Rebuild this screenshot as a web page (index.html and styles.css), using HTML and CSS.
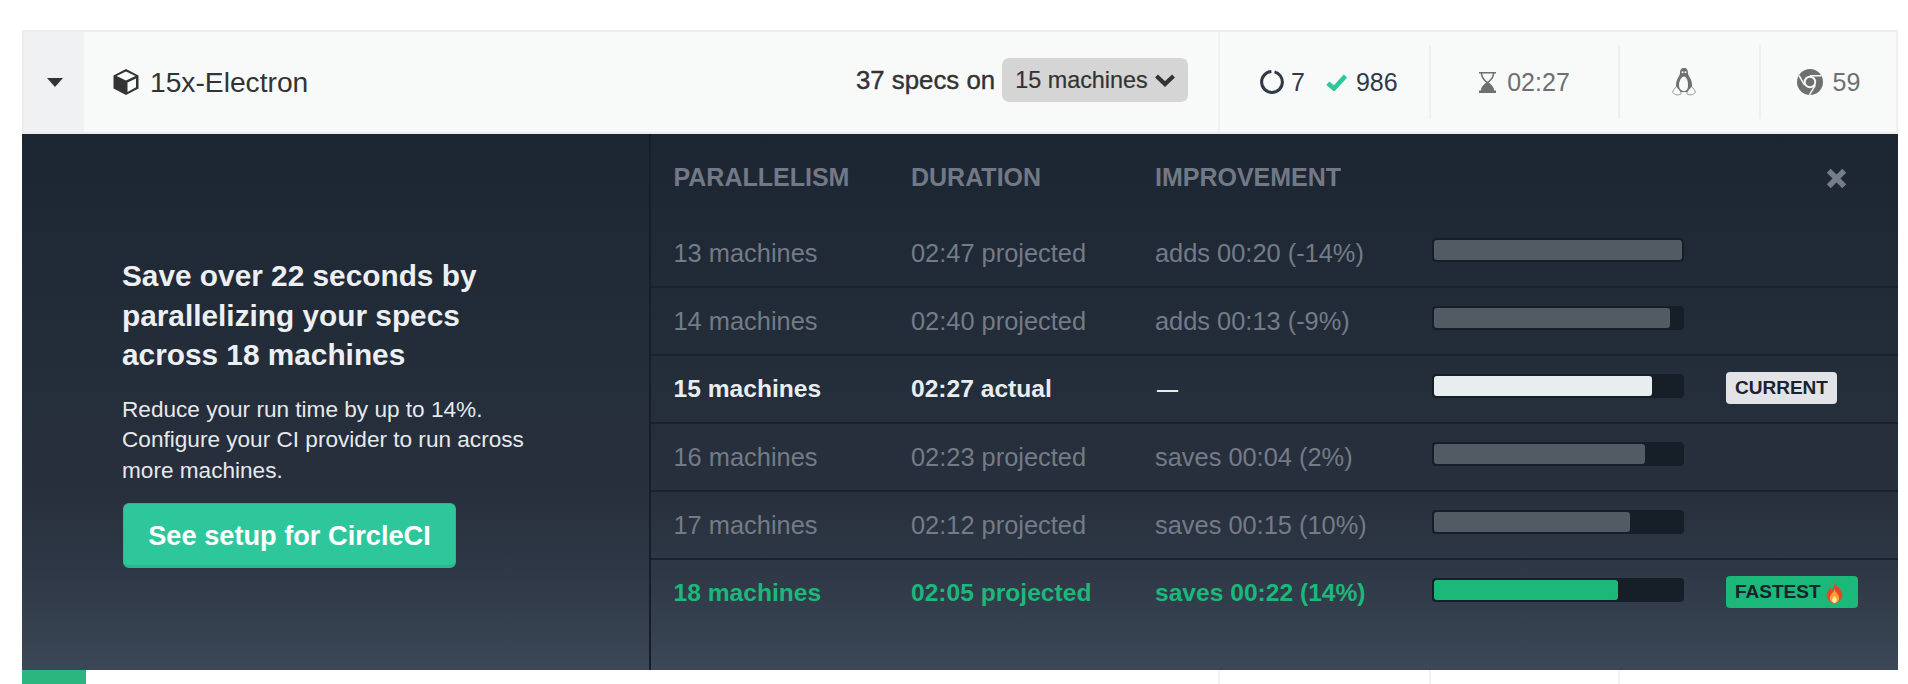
FILE: index.html
```html
<!DOCTYPE html>
<html lang="en">
<head>
<meta charset="utf-8">
<title>15x-Electron</title>
<link rel="stylesheet" href="styles.css">
</head>
<body>
<div class="card">
  <header class="head">
    <div class="toggle"><svg class="caret" viewBox="0 0 16 9"><path d="M0 0h16L8 9z"/></svg></div>
    <div class="name">
      <svg class="cube" viewBox="0 0 26 26"><path class="cube-dark" d="M13 0 25.500 6.500v13L13 26 .5 19.500v-13z"/><path class="cube-light" d="M13 2.500 22.500 7 13 11.500 3.500 7z"/><path class="cube-light" d="M14.500 13.500 23 9.500v8.800l-8.500 4.700z"/></svg>
      <span>15x-Electron</span>
    </div>
    <div class="specs">
      <span class="specs-text">37 specs on</span>
      <button class="machines">15 machines <svg class="chev" viewBox="0 0 20 14"><path d="M1.500 3 10 11 18.500 3" /></svg></button>
    </div>
    <div class="results">
      <svg class="ring" viewBox="0 0 24 24"><circle cx="12" cy="12" r="10.400" pathLength="100" stroke-dasharray="95 5" stroke-dashoffset="-4" transform="rotate(-90 12 12)"/></svg>
      <span class="count-a">7</span>
      <svg class="check" viewBox="0 0 21 17"><path d="M1.800 9.200 8 14.500 19.500 2"/></svg>
      <span>986</span>
    </div>
    <div class="cell cell-time">
      <svg class="glass" viewBox="0 0 17 21"><path d="M0 0h17v1.500h-1.800c0 4-2.600 6.800-5.400 9 2.800 2.200 5.400 5 5.400 8H17V21H0v-2.500h1.800c0-3 2.600-5.800 5.400-8-2.800-2.200-5.400-5-5.400-9H0z"/><path class="glass-cut" d="M3.300 1.500h10.400c0 3.500-3 6.500-5.200 8.200C6.300 8 3.300 5 3.300 1.500z"/></svg>
      <span>02:27</span>
    </div>
    <div class="cell cell-os">
      <svg class="tux" viewBox="0 0 24 28"><path class="tux-body" d="M12 0C9 0 8 2 8 5 8 8 4 11 4 17c0 3 2 6 4 7h8c2-1 4-4 4-7 0-6-4-9-4-12 0-3-1-5-4-5z"/><path class="tux-belly" d="M12 8.500c-2.500 0-5 4.500-5 8.500 0 3.500 2 6 5 6s4-2.500 4-6c0-4-1.500-8.500-4-8.500z"/><circle class="tux-belly" cx="10.500" cy="4.200" r="1"/><circle class="tux-belly" cx="13.500" cy="4.200" r="1"/><path class="tux-foot" d="M4.500 18.500C3 20.500 .8 22 .6 24.500c2 2.500 6.400 3.200 8.400 1.300.6-2.300-2.800-4.800-4.500-7.300zM19.500 18.500c1.500 2 3.700 3.500 3.900 6-2 2.500-6.400 3.200-8.400 1.300-.6-2.300 2.800-4.800 4.500-7.300z"/></svg>
    </div>
    <div class="cell cell-browser">
      <svg class="chrome" viewBox="0 0 26 26"><circle class="chrome-disc" cx="13" cy="13" r="13"/><circle class="chrome-gap" cx="13" cy="13" r="6.200"/><circle class="chrome-disc" cx="13" cy="13" r="4.300"/><path class="chrome-line" d="M13 6.800h11.500M7.600 16.100 2 6.500M18.400 16.100 12.500 25.800"/></svg>
      <span>59</span>
    </div>
  </header>

  <section class="panel">
    <div class="pitch">
      <h2 class="pitch-title">Save over 22 seconds by parallelizing your specs across 18 machines</h2>
      <p class="pitch-text">Reduce your run time by up to 14%. Configure your CI provider to run across more machines.</p>
      <a class="setup">See setup for CircleCI</a>
    </div>
    <div class="options">
      <div class="row row-head">
        <div>PARALLELISM</div><div>DURATION</div><div>IMPROVEMENT</div>
        <svg class="close" viewBox="0 0 19 19"><path d="M2.500 2.500 16.500 16.500M16.500 2.500 2.500 16.500"/></svg>
      </div>
      <div class="row">
        <div>13 machines</div><div>02:47 projected</div><div>adds 00:20 (-14%)</div>
        <div class="track"><div class="fill" style="width:100%"></div></div>
      </div>
      <div class="row">
        <div>14 machines</div><div>02:40 projected</div><div>adds 00:13 (-9%)</div>
        <div class="track"><div class="fill" style="width:95%"></div></div>
      </div>
      <div class="row row-current">
        <div>15 machines</div><div>02:27 actual</div><div class="dash">—</div>
        <div class="track"><div class="fill" style="width:88%"></div></div>
        <div class="tag tag-current">CURRENT</div>
      </div>
      <div class="row">
        <div>16 machines</div><div>02:23 projected</div><div>saves 00:04 (2%)</div>
        <div class="track"><div class="fill" style="width:85%"></div></div>
      </div>
      <div class="row">
        <div>17 machines</div><div>02:12 projected</div><div>saves 00:15 (10%)</div>
        <div class="track"><div class="fill" style="width:79%"></div></div>
      </div>
      <div class="row row-fastest">
        <div>18 machines</div><div>02:05 projected</div><div>saves 00:22 (14%)</div>
        <div class="track"><div class="fill" style="width:74%"></div></div>
        <div class="tag tag-fastest">FASTEST
          <svg class="flame" viewBox="0 0 16 20"><path class="flame-out" d="M8 0c1 4 7 6 7.500 12 .3 4.500-3.500 8-7.500 8s-8-3.500-7.500-8C.8 9 3 8 3.500 5.500 5 6.500 5.500 8 5.500 8 7 6 8.500 3 8 0z"/><path class="flame-mid" d="M8 7c.5 3 4.500 4.500 4.500 8.500 0 2.500-2 4.500-4.500 4.500s-4.500-2-4.500-4.500C3.500 12 7 10.500 8 7z"/><path class="flame-in" d="M8 12.500c.5 1.500 2.300 2.500 2.300 4.300 0 1.500-1 3-2.300 3s-2.300-1.500-2.300-3c0-1.800 1.800-2.800 2.300-4.300z"/></svg>
        </div>
      </div>
    </div>
  </section>

  <footer class="foot">
    <div class="foot-bar"></div>
    <div class="foot-main"></div>
    <div class="foot-cell foot-results"></div>
    <div class="foot-cell foot-time"></div>
    <div class="foot-rest"></div>
  </footer>
</div>
</body>
</html>
```

FILE: styles.css
```css
* { box-sizing: border-box; }
html, body { margin: 0; padding: 0; background: #fff; overflow: hidden; }
body { font-family: "Liberation Sans", Arial, sans-serif; color: #2f3a46; height: 684px; }

.card { width: 1876px; margin: 30px 0 0 22px; }

/* header row */
.head {
  display: flex;
  height: 104px;
  background: #f8f9f9;
  border-top: 2px solid #ececec;
  border-bottom: 2px solid #ececec;
  border-left: 2px solid #ececec;
  border-right: 2px solid #eef0f0;
  align-items: stretch;
}
.toggle { width: 60px; background: #f0f1f3; display: flex; align-items: center; justify-content: center; }
.caret { width: 16px; height: 9px; fill: #333; margin-left: 2px; }
.name { display: flex; align-items: center; padding-left: 29px; gap: 11px; font-size: 28.200px; color: #333; width: 772px; }
.cube { width: 26px; height: 26px; flex: none; }
.cube-dark { fill: #333; }
.cube-light { fill: #fbfbfb; }
.specs { display: flex; align-items: center; width: 362px; justify-content: flex-start; }
.specs-text { font-size: 25.800px; color: #333; margin-right: 7px; -webkit-text-stroke: .4px #333; margin-bottom: 4px; }
.machines {
  display: inline-flex; align-items: center; gap: 7px;
  height: 44px; width: 186px; padding: 0 0 0 13px; margin-bottom: 4px;
  background: #d5d5d5; border: 0; border-radius: 7px;
  font: 400 23.400px "Liberation Sans", Arial, sans-serif; color: #333;
  -webkit-text-stroke: .2px #333;
}
.chev { width: 20px; height: 14px; fill: none; stroke: #333; stroke-width: 4.200; }
.results {
  display: flex; align-items: center; width: 211px;
  border-left: 2px solid #f0f1f1; padding-left: 40px;
  font-size: 25px; color: #2f3a46;
}
.ring { width: 24px; height: 24px; fill: none; stroke: #2f3a46; stroke-width: 3; margin-right: 7px; }
.count-a { margin-right: 21px; }
.check { width: 21px; height: 17px; fill: none; stroke: #2ec79b; stroke-width: 4.600; margin-right: 9px; }
.cell {
  align-self: center; height: 74px; display: flex; align-items: center; justify-content: center;
  border-left: 2px solid #eef0f0; font-size: 25px; color: #6f6f6f;
}
.cell-time { width: 189px; gap: 11px; }
.cell-os { width: 141px; padding-right: 11px; }
.cell-browser { width: 137px; gap: 10px; }
.glass { width: 17px; height: 21px; fill: #6f6f6f; }
.glass-cut { fill: #f8f9f9; }
.tux { width: 24px; height: 28px; }
.tux-body { fill: #6f6f6f; }
.tux-belly { fill: #f8f9f9; }
.tux-foot { fill: #f8f9f9; stroke: #808080; stroke-width: .8; }
.chrome { width: 26px; height: 26px; }
.chrome-disc { fill: #6f6f6f; }
.chrome-gap { fill: #f8f9f9; }
.chrome-line { fill: none; stroke: #f8f9f9; stroke-width: 1.500; }

/* dark panel */
.panel {
  display: flex;
  height: 536px;
  background: linear-gradient(180deg, #1c2632 0%, #242d3a 45%, #28303d 68%, #2e3846 82%, #3c4757 100%);
}
.pitch { width: 627px; padding: 122px 0 0 100px; }
.pitch-title { margin: 0; width: 390px; font-size: 29.800px; line-height: 39.600px; font-weight: 700; color: #edf0f2; }
.pitch-text { margin: 20px 0 17px; width: 420px; font-size: 22.600px; line-height: 30.500px; color: #e6e9ec; }
.setup {
  display: block; width: 333px; height: 65px; margin-left: 1px;
  background: #2ec79b; border: 1px solid #2cb88f; border-bottom: 3px solid #2cb88f; border-radius: 6px;
  color: #fff; font-size: 27.200px; font-weight: 700; line-height: 63px; text-align: center;
}
.options { flex: 1; border-left: 2px solid #161e27; }
.row {
  display: grid;
  grid-template-columns: 237.500px 244px 277px 294px 1fr;
  align-items: center;
  height: 68px;
  padding-left: 22.500px;
  border-bottom: 2px solid #1a222d;
  font-size: 25.400px;
  color: #747b87;
}
.row:last-child { border-bottom-color: transparent; }
.row-head { height: 86px; border-bottom: 0; font-size: 25px; font-weight: 700; color: #727985; grid-template-columns: 237.500px 244px 1fr 21px; padding-right: 51px; }
.close { width: 21px; height: 21px; fill: none; stroke: #767d88; stroke-width: 5; margin-top: 3px; }
.row-current { font-weight: 700; font-size: 24.600px; color: #e9edf0; }
.row-fastest { font-weight: 700; font-size: 24.600px; color: #1bb87a; }
.dash { padding-left: 2px; font-size: 21px; }
.track { width: 252px; height: 24px; padding: 2px; margin-bottom: 6px; background: #161e27; border-radius: 4px; }
.fill { height: 20px; background: #525a63; border-radius: 3px; }
.row-current .fill { background: #e8edf0; }
.row-fastest .fill { background: #1bb87a; }
.tag { height: 32px; display: inline-flex; align-items: center; justify-self: start; padding: 0 9px; border-radius: 4px; font-size: 19px; font-weight: 700; color: #1a222d; }
.tag-current { background: #e1e3e7; margin-bottom: 2px; }
.tag-fastest { background: #1bb87a; margin-bottom: 2px; gap: 4px; padding-right: 14px; }
.flame { width: 19px; height: 21px; }
.flame-out { fill: #e8442a; }
.flame-mid { fill: #ff9d2e; }
.flame-in { fill: #ffe9a8; }

/* strip below */
.foot { display: flex; height: 14px; }
.foot-bar { width: 64px; background: #2cb67f; }
.foot-main { width: 1132px; }
.foot-cell { width: 2px; border-left: 2px solid #f0f1f1; }
.foot-results { margin-right: 209px; }
.foot-time { margin-right: 187px; }
.foot-rest { flex: 1; border-left: 2px solid #f0f1f1; }
```
